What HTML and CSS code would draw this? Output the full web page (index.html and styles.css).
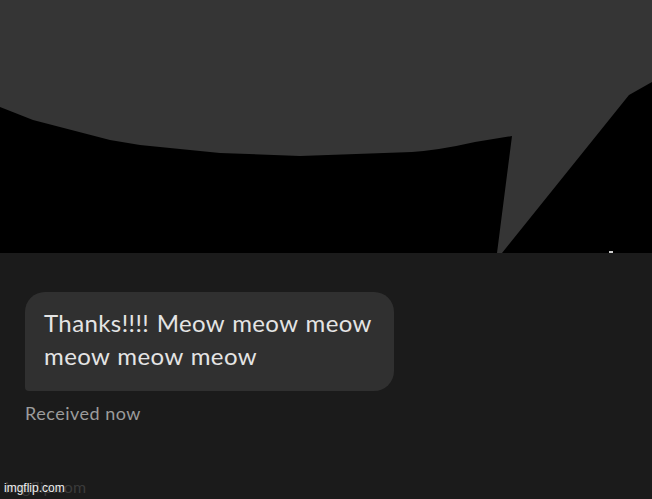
FILE: index.html
```html
<!DOCTYPE html>
<html>
<head>
<meta charset="utf-8">
<link rel="stylesheet" href="styles.css">
</head>
<body>
<div class="screen">
  <div class="comic">
    <svg class="comic-art" width="652" height="253" viewBox="0 0 652 253">
      <rect x="0" y="0" width="652" height="253" fill="#000"/>
      <path d="M0 0 H652 V82 L629 95 L502 253 H497 L512 136 L475 142 Q440 150 412 152 L300 156 L220 153 L140 145 L110 140 L33 120 L0 107 Z" fill="#353535"/>
    </svg>
  </div>
  <div class="chat">
    <div class="bubble">
      <p class="msg">Thanks!!!! Meow meow meow meow meow meow</p>
    </div>
    <div class="status">Received now</div>
    <span class="tick"></span>
  </div>
  <div class="watermark">
    <span class="ghost">imgflip.com</span>
    <span class="mark">imgflip.com</span>
  </div>
</div>
</body>
</html>
```
FILE: styles.css
```css
html, body {
  margin: 0;
  padding: 0;
  background: #1b1b1b;
}
.screen {
  width: 652px;
  height: 499px;
  position: relative;
  overflow: hidden;
  background: #1b1b1b;
  font-family: "Lato", "Open Sans", sans-serif;
}
.comic {
  height: 253px;
}
.comic-art {
  display: block;
}
.chat {
  position: relative;
  padding: 39px 0 0 25px;
}
.bubble {
  width: 369px;
  height: 99px;
  box-sizing: border-box;
  background: #303030;
  border-radius: 20px 20px 20px 4px;
  padding: 14px 0 0 19px;
}
.msg {
  margin: 0;
  width: 345px;
  font-size: 24px;
  line-height: 33px;
  color: #e4e4e4;
  letter-spacing: 0.4px;
  word-spacing: 1px;
}
.status {
  margin-top: 11px;
  font-size: 18px;
  color: #9c9c9c;
  letter-spacing: 0.5px;
}
.tick {
  position: absolute;
  top: -2px;
  left: 609px;
  width: 4px;
  height: 2px;
  background: #cfcfcf;
}
.watermark {
  position: absolute;
  left: 4px;
  bottom: 4px;
}
.ghost {
  position: absolute;
  left: 1px;
  bottom: -1px;
  font-size: 16px;
  color: #3a3a3a;
  white-space: nowrap;
}
.mark {
  position: relative;
  font-family: "Liberation Sans", sans-serif;
  font-size: 12px;
  color: #eeeeee;
  white-space: nowrap;
}
```
